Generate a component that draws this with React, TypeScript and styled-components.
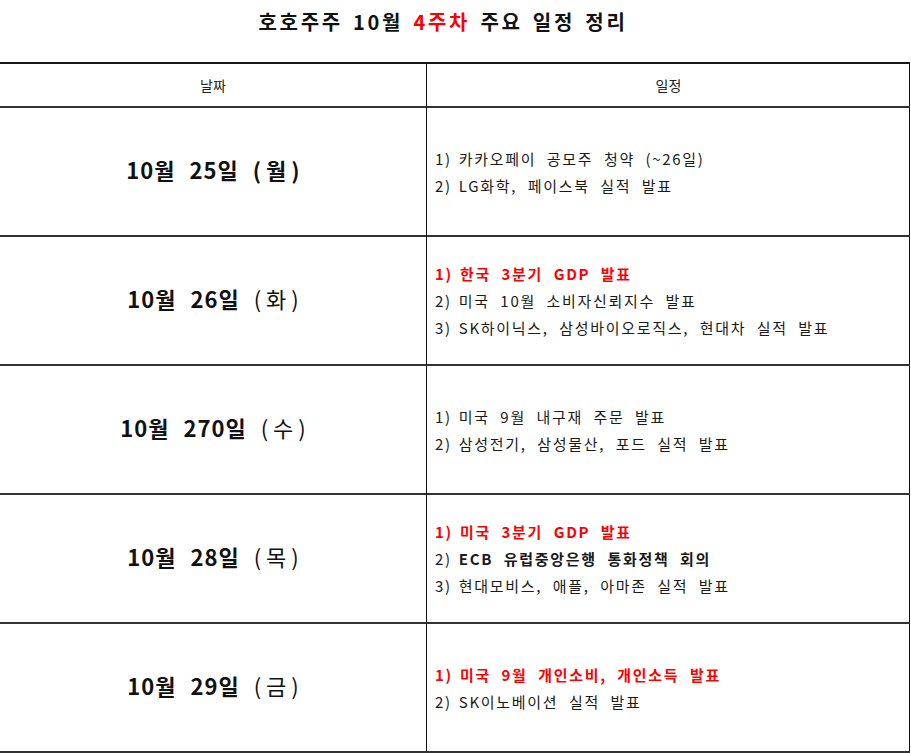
import styled, { createGlobalStyle } from 'styled-components';

type Tone = 'plain' | 'red' | 'bold';

interface Item {
	num: string;
	text: string;
	tone: Tone;
}

interface Day {
	date: string;
	weekday: string;
	weekdayBold?: boolean;
	items: Item[];
}

const days: Day[] = [
	{
		date: '10월 25일',
		weekday: '(월)',
		weekdayBold: true,
		items: [
			{ num: '1)', text: '카카오페이 공모주 청약 (~26일)', tone: 'plain' },
			{ num: '2)', text: 'LG화학, 페이스북 실적 발표', tone: 'plain' },
		],
	},
	{
		date: '10월 26일',
		weekday: '(화)',
		items: [
			{ num: '1)', text: '한국 3분기 GDP 발표', tone: 'red' },
			{ num: '2)', text: '미국 10월 소비자신뢰지수 발표', tone: 'plain' },
			{ num: '3)', text: 'SK하이닉스, 삼성바이오로직스, 현대차 실적 발표', tone: 'plain' },
		],
	},
	{
		date: '10월 270일',
		weekday: '(수)',
		items: [
			{ num: '1)', text: '미국 9월 내구재 주문 발표', tone: 'plain' },
			{ num: '2)', text: '삼성전기, 삼성물산, 포드 실적 발표', tone: 'plain' },
		],
	},
	{
		date: '10월 28일',
		weekday: '(목)',
		items: [
			{ num: '1)', text: '미국 3분기 GDP 발표', tone: 'red' },
			{ num: '2)', text: 'ECB 유럽중앙은행 통화정책 회의', tone: 'bold' },
			{ num: '3)', text: '현대모비스, 애플, 아마존 실적 발표', tone: 'plain' },
		],
	},
	{
		date: '10월 29일',
		weekday: '(금)',
		items: [
			{ num: '1)', text: '미국 9월 개인소비, 개인소득 발표', tone: 'red' },
			{ num: '2)', text: 'SK이노베이션 실적 발표', tone: 'plain' },
		],
	},
];

export default function App() {
	return (
		<>
			<GlobalStyle />
			<Page>
				<Title>
					호호주주 10월 <Red>4주차</Red> 주요 일정 정리
				</Title>
				<Table>
					<HeadCell $first>날짜</HeadCell>
					<HeadCell>일정</HeadCell>
					{days.map((day) => (
						<Row key={day.date}>
							<DateCell>
								<DateText>{day.date}</DateText>
								<Weekday $bold={day.weekdayBold}>{day.weekday}</Weekday>
							</DateCell>
							<ScheduleCell>
								{day.items.map((item) => (
									<Line key={item.num} $tone={item.tone}>
										<Num $tone={item.tone}>{item.num}</Num>
										{item.text}
									</Line>
								))}
							</ScheduleCell>
						</Row>
					))}
				</Table>
			</Page>
		</>
	);
}

const GlobalStyle = createGlobalStyle`
	html, body {
		margin: 0;
		padding: 0;
		background: #ffffff;
	}
	body {
		font-family: "Noto Sans CJK KR", "Liberation Sans", sans-serif;
		color: #111111;
	}
`;

const Page = styled.div`
	width: 911px;
	height: 753px;
	overflow: hidden;
	background: #ffffff;
`;

const Title = styled.h1`
	margin: 0;
	height: 62px;
	box-sizing: border-box;
	padding: 8px 25px 0 0;
	text-align: center;
	font-size: 20px;
	line-height: 28px;
	font-weight: 700;
	letter-spacing: 2.7px;
	word-spacing: 3px;
	color: #111111;
`;

const Red = styled.span`
	color: #ff0000;
`;

const Table = styled.div`
	display: grid;
	grid-template-columns: 427px 483px;
	grid-template-rows: 44px repeat(5, 129px);
	width: 910px;
	box-sizing: border-box;
	border-top: 2px solid #1a1a1a;
	border-right: 1px solid #111111;
`;

const HeadCell = styled.div<{ $first?: boolean }>`
	display: flex;
	align-items: center;
	justify-content: center;
	border-bottom: 2px solid #333333;
	border-right: ${(p) => (p.$first ? '1px solid #111111' : 'none')};
	font-size: 14px;
	color: #222222;
	padding-bottom: 1px;
`;

const Row = styled.div`
	display: contents;
`;

const DateCell = styled.div`
	display: flex;
	align-items: center;
	justify-content: center;
	gap: 14px;
	padding-bottom: 6px;
	border-bottom: 2px solid #333333;
	border-right: 1px solid #111111;
	font-size: 22px;
	color: #111111;
`;

const DateText = styled.span`
	font-weight: 700;
	letter-spacing: 1px;
	word-spacing: 8px;
`;

const Weekday = styled.span<{ $bold?: boolean }>`
	font-weight: ${(p) => (p.$bold ? 700 : 400)};
	letter-spacing: 5px;
	margin-right: -5px;
`;

const ScheduleCell = styled.div`
	display: flex;
	flex-direction: column;
	justify-content: center;
	padding-left: 8px;
	border-bottom: 2px solid #333333;
`;

const Line = styled.div<{ $tone: Tone }>`
	font-size: 15px;
	line-height: 27px;
	letter-spacing: 1.7px;
	word-spacing: 5.5px;
	white-space: nowrap;
	color: ${(p) => (p.$tone === 'red' ? '#ff0000' : '#1a1a1a')};
	font-weight: ${(p) => (p.$tone === 'plain' ? 400 : 700)};
`;

const Num = styled.span<{ $tone: Tone }>`
	font-weight: ${(p) => (p.$tone === 'red' ? 700 : 400)};
	margin-right: 7px;
`;
